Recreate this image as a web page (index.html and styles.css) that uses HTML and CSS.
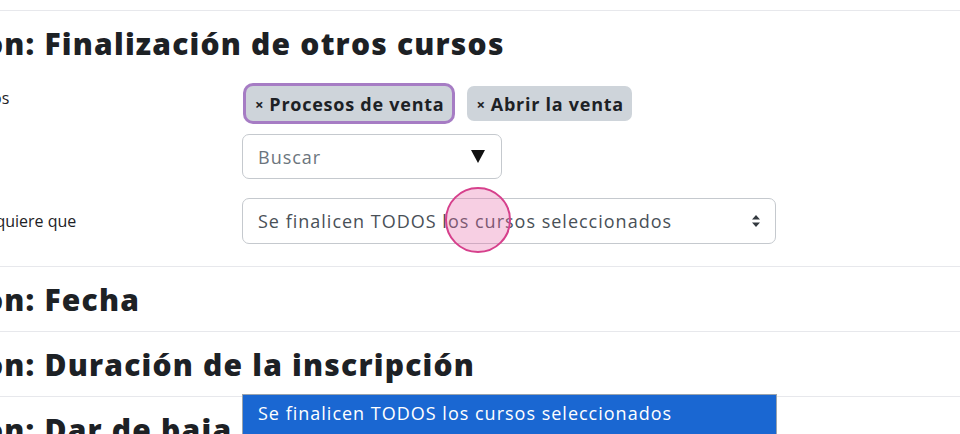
FILE: index.html
```html
<!DOCTYPE html>
<html lang="es">
<head>
<meta charset="utf-8">
<title>Condiciones</title>
<link rel="stylesheet" href="styles.css">
</head>
<body>
<div class="page">
  <section class="sec first">
    <h3 class="sec-title">on: Finalización de otros cursos</h3>
    <div class="row row-courses">
      <div class="label">Cursos</div>
      <div class="field">
        <div class="tags">
          <span class="tag tag-focus"><span class="x">×</span> Procesos de venta</span>
          <span class="tag"><span class="x">×</span> Abrir la venta</span>
        </div>
        <div class="search">
          <span class="placeholder">Buscar</span>
          <span class="tri"></span>
        </div>
      </div>
    </div>
    <div class="row row-require">
      <div class="label label-mid">Se requiere que</div>
      <div class="field">
        <div class="select">
          <span class="select-text">Se finalicen TODOS los cursos seleccionados</span>
          <svg class="updown" width="10" height="14" viewBox="0 0 10 14"><path d="M5 1 L9 5.5 H1 Z M5 13 L9 8.5 H1 Z" fill="#343a40"/></svg>
          <span class="touch"></span>
        </div>
      </div>
    </div>
  </section>
  <section class="sec">
    <h3 class="sec-title">on: Fecha</h3>
  </section>
  <section class="sec">
    <h3 class="sec-title">on: Duración de la inscripción</h3>
  </section>
  <section class="sec">
    <h3 class="sec-title">on: Dar de baja</h3>
  </section>
</div>
<div class="dropdown">
  <div class="option selected">Se finalicen TODOS los cursos seleccionados</div>
</div>
</body>
</html>
```
FILE: styles.css
```css
html, body {
  margin: 0;
  padding: 0;
  width: 960px;
  height: 434px;
  overflow: hidden;
  background: #ffffff;
}
body {
  font-family: "Open Sans", "Liberation Sans", sans-serif;
  color: #1d2125;
  position: relative;
}
.page {
  padding-top: 10px;
  margin-left: -47px;
}
.sec {
  border-top: 1px solid #e7e8ec;
}
.sec-title {
  margin: 0 0 0 31px;
  height: 64px;
  display: flex;
  align-items: center;
  font-size: 30px;
  font-weight: 800;
  letter-spacing: 1.2px;
  white-space: nowrap;
  color: #1d2125;
}
.row {
  display: flex;
}
.label {
  width: 289px;
  box-sizing: border-box;
  padding-left: 5px;
  flex: none;
  font-size: 16px;
  line-height: 24px;
  color: #1d2125;
}
.row-courses {
  margin-top: 11px;
}
.row-require {
  margin-top: 19px;
  margin-bottom: 22px;
}
.label-mid {
  padding-top: 11px;
}
.field {
  display: flex;
  flex-direction: column;
}
.tags {
  display: flex;
  gap: 15px;
  margin-left: 4px;
}
.tag {
  height: 35px;
  box-sizing: border-box;
  padding: 0 8px 0 9px;
  display: inline-flex;
  align-items: center;
  background: #ced4da;
  border-radius: 7px;
  font-size: 18px;
  font-weight: 700;
  color: #1d2125;
  letter-spacing: 0.75px;
  white-space: nowrap;
}
.tag .x {
  font-size: 15px;
  margin-right: 5px;
}
.tag-focus {
  box-shadow: 0 0 0 3px #a67cc4;
}
.search {
  margin-top: 13px;
  width: 260px;
  height: 45px;
  box-sizing: border-box;
  border: 1px solid #c5c9ce;
  border-radius: 7px;
  display: flex;
  align-items: center;
  justify-content: space-between;
  padding: 0 16px 0 15px;
}
.placeholder {
  color: #6c757d;
  font-size: 18px;
  letter-spacing: 1px;
}
.tri {
  width: 0;
  height: 0;
  border-left: 7px solid transparent;
  border-right: 7px solid transparent;
  border-top: 13px solid #111111;
}
.select {
  position: relative;
  width: 534px;
  height: 46px;
  box-sizing: border-box;
  border: 1px solid #c5c9ce;
  border-radius: 7px;
  display: flex;
  align-items: center;
  justify-content: space-between;
  padding: 0 14px 0 15px;
}
.select-text {
  color: #495057;
  font-size: 18px;
  letter-spacing: 1px;
  white-space: nowrap;
}
.touch {
  position: absolute;
  left: 202px;
  top: -12px;
  width: 62px;
  height: 62px;
  border-radius: 50%;
  border: 2px solid #d6408c;
  background: rgba(232, 110, 170, 0.33);
}
.dropdown {
  position: absolute;
  left: 242px;
  top: 394px;
  width: 533px;
  height: 60px;
  background: #1a67d2;
  border-top: 1px solid #9aa3ad;
  border-left: 1px solid #9aa3ad;
  border-right: 1px solid #9aa3ad;
}
.option {
  color: #ffffff;
  font-size: 18px;
  letter-spacing: 1px;
  padding: 6px 0 0 15px;
  white-space: nowrap;
}
```
